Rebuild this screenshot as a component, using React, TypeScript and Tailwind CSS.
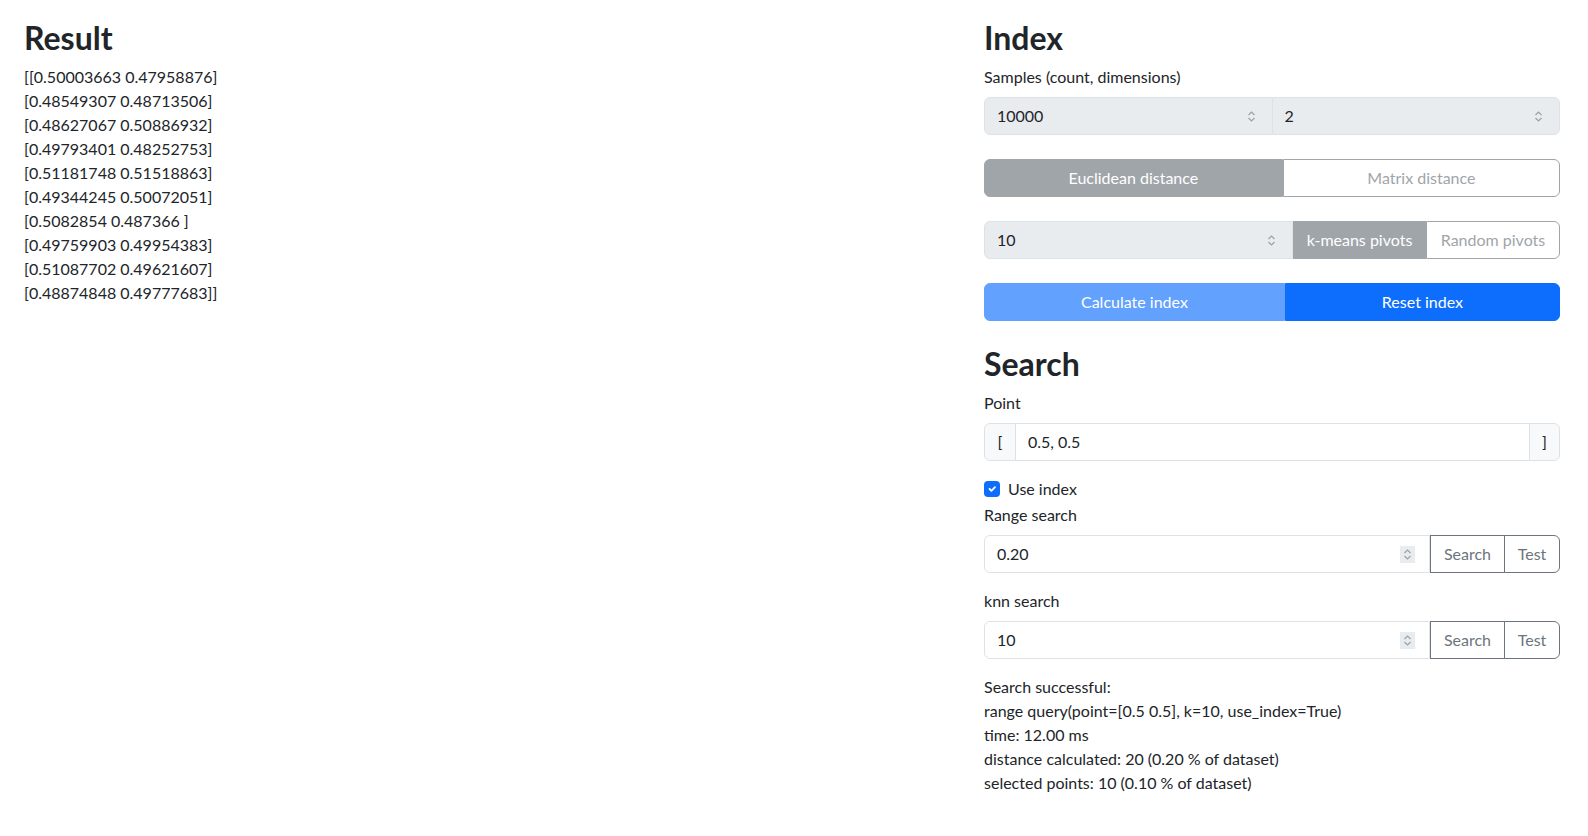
const rows = [
  "[[0.50003663 0.47958876]",
  "[0.48549307 0.48713506]",
  "[0.48627067 0.50886932]",
  "[0.49793401 0.48252753]",
  "[0.51181748 0.51518863]",
  "[0.49344245 0.50072051]",
  "[0.5082854 0.487366 ]",
  "[0.49759903 0.49954383]",
  "[0.51087702 0.49621607]",
  "[0.48874848 0.49777683]]",
];

function Spinner({ boxed }: { boxed?: boolean }) {
  return (
    <span
      className={
        "flex h-[17px] w-[15px] items-center justify-center " +
        (boxed ? "bg-[#e9ecef]" : "")
      }
    >
      <svg width="9" height="13" viewBox="0 0 9 13" fill="none" stroke="#9ca0a5" strokeWidth="1.2">
        <polyline points="1.5,5 4.5,2 7.5,5" />
        <polyline points="1.5,8 4.5,11 7.5,8" />
      </svg>
    </span>
  );
}

function Label({ children }: { children: React.ReactNode }) {
  return <div className="mb-2 h-6 leading-6">{children}</div>;
}

function SearchRow({ value }: { value: string }) {
  return (
    <div className="mb-4 flex h-[38px]">
      <div className="flex flex-1 items-center justify-between rounded-l-md border border-[#dee2e6] bg-white pl-3 pr-[14px]">
        <span>{value}</span>
        <Spinner boxed />
      </div>
      <button className="w-[75px] border border-[#6c757d] bg-white text-[#6c757d]">Search</button>
      <button className="-ml-px w-[56px] rounded-r-md border border-[#6c757d] bg-white text-[#6c757d]">Test</button>
    </div>
  );
}

export default function App() {
  return (
    <div
      className="flex min-h-screen bg-white pl-6 pr-7 pt-[19px] text-[16px] leading-6 text-[#212529]"
      style={{ fontFamily: "Lato, 'Noto Sans', sans-serif" }}
    >
      {/* left: result */}
      <div className="flex-1">
        <h2 className="mb-2 text-[32px] font-bold leading-[38px]">Result</h2>
        <div className="whitespace-pre">
          {rows.map((r) => (
            <div key={r} className="h-6">
              {r}
            </div>
          ))}
        </div>
      </div>

      {/* right: index + search */}
      <div className="w-[576px]">
        <h2 className="mb-2 text-[32px] font-bold leading-[38px]">Index</h2>
        <Label>Samples (count, dimensions)</Label>
        <div className="mb-6 flex h-[38px]">
          <div className="flex flex-1 items-center justify-between rounded-l-md border border-[#dee2e6] bg-[#e9ecef] pl-3 pr-[13px]">
            <span>10000</span>
            <Spinner />
          </div>
          <div className="-ml-px flex flex-1 items-center justify-between rounded-r-md border border-[#dee2e6] bg-[#e9ecef] pl-3 pr-[13px]">
            <span>2</span>
            <Spinner />
          </div>
        </div>

        <div className="mb-6 flex h-[38px]">
          <button className="flex-auto rounded-l-md border border-[#a0a5aa] bg-[#a0a5aa] px-3 text-white">
            Euclidean distance
          </button>
          <button className="flex-auto rounded-r-md border border-[#a0a5aa] bg-white px-3 text-[#a0a5aa]">
            Matrix distance
          </button>
        </div>

        <div className="mb-6 flex h-[38px]">
          <div className="flex flex-1 items-center justify-between rounded-l-md border border-[#dee2e6] bg-[#e9ecef] pl-3 pr-[13px]">
            <span>10</span>
            <Spinner />
          </div>
          <button className="w-[133px] border border-[#a0a5aa] bg-[#a0a5aa] text-white">k-means pivots</button>
          <button className="w-[134px] rounded-r-md border border-[#a0a5aa] bg-white text-[#a0a5aa]">
            Random pivots
          </button>
        </div>

        <div className="mb-6 flex h-[38px]">
          <button className="flex-auto rounded-l-md border border-[#62a1fe] bg-[#62a1fe] px-3 text-white">
            Calculate index
          </button>
          <button className="flex-auto rounded-r-md border border-[#0d6efd] bg-[#0d6efd] px-3 text-white">
            Reset index
          </button>
        </div>

        <h2 className="mb-2 text-[32px] font-bold leading-[38px]">Search</h2>
        <Label>Point</Label>
        <div className="mb-4 flex h-[38px]">
          <span className="flex w-8 items-center justify-center rounded-l-md border border-[#dee2e6] bg-[#f8f9fa]">
            [
          </span>
          <div className="-ml-px flex flex-1 items-center border border-[#dee2e6] bg-white px-3">0.5, 0.5</div>
          <span className="-ml-px flex w-[31px] items-center justify-center rounded-r-md border border-[#dee2e6] bg-[#f8f9fa]">
            ]
          </span>
        </div>

        <div className="mb-0.5 flex h-6 items-center gap-2">
          <span className="flex h-4 w-4 items-center justify-center rounded bg-[#0d6efd]">
            <svg width="12" height="12" viewBox="0 0 20 20" fill="none" stroke="white" strokeWidth="3" strokeLinecap="round" strokeLinejoin="round">
              <path d="M6 10l3 3l6-6" />
            </svg>
          </span>
          <span>Use index</span>
        </div>

        <Label>Range search</Label>
        <SearchRow value="0.20" />

        <Label>knn search</Label>
        <SearchRow value="10" />

        <div>
          <div>Search successful:</div>
          <div>range query(point=[0.5 0.5], k=10, use_index=True)</div>
          <div>time: 12.00 ms</div>
          <div>distance calculated: 20 (0.20 % of dataset)</div>
          <div>selected points: 10 (0.10 % of dataset)</div>
        </div>
      </div>
    </div>
  );
}
